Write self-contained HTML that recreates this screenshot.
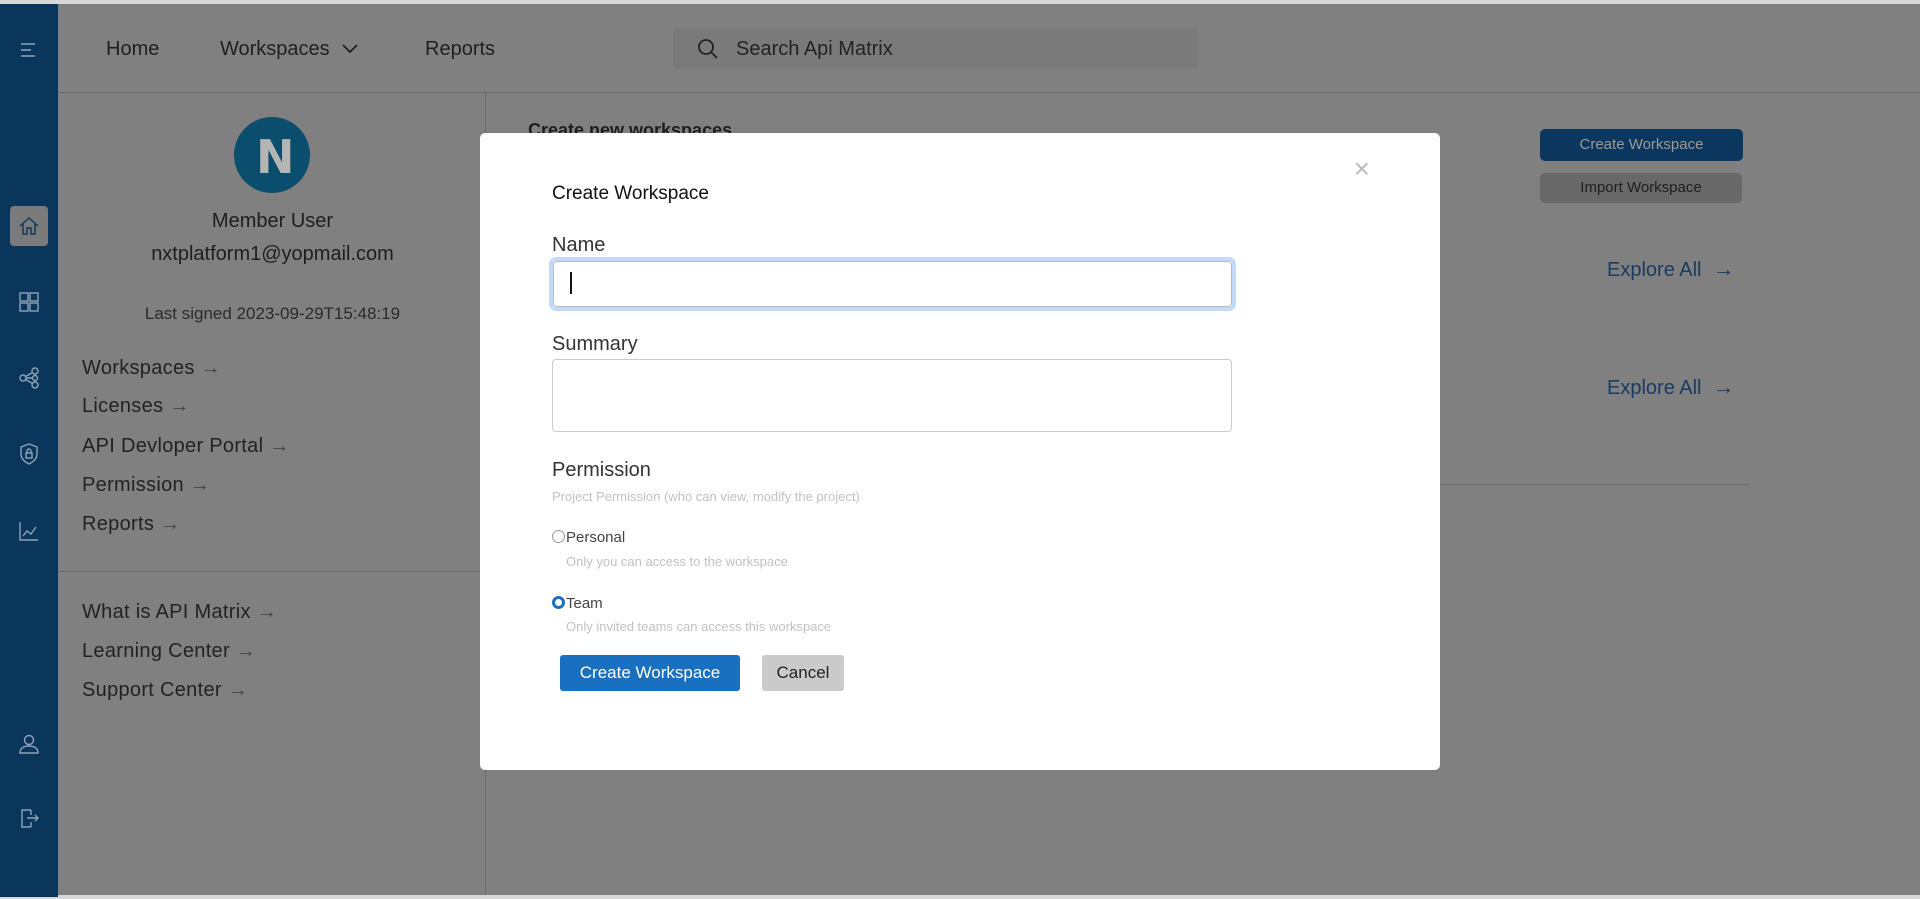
<!DOCTYPE html>
<html><head><meta charset="utf-8"><style>
*{margin:0;padding:0;box-sizing:border-box}
body{width:1920px;height:899px;overflow:hidden;background:#808080;font-family:"Liberation Sans",sans-serif;position:relative;color:#1e1e1e}
.a{position:absolute;white-space:nowrap}
.side{position:absolute;left:0;top:4px;width:58px;height:893px;background:#0b365c}
.ic{position:absolute;left:17px;width:24px;height:24px;fill:none;stroke:#8fa3b8;stroke-width:1.4}
.nav{font-size:20px;color:#1f1f1f;top:38px}
.lk{font-size:20px;color:#222;left:82px;letter-spacing:.3px}
.lk span{color:#444;font-size:20px}
.modal{position:absolute;left:480px;top:133px;width:960px;height:637px;background:#fff;border-radius:5px}
.m{position:absolute;white-space:nowrap}
</style></head><body>
<div class="a" style="left:0;top:0;width:1920px;height:4px;background:#d8d8d8"></div>
<div class="a" style="left:0;top:895px;width:1920px;height:4px;background:#d8d8d8"></div>
<div class="side">
<svg class="ic" style="top:34px" viewBox="0 0 24 24"><path d="M4 6h14M4 12h10M4 18h14"/></svg>
<div class="a" style="left:10px;top:202px;width:38px;height:40px;background:#7b7b7b;border-radius:4px"></div>
<svg class="ic" style="top:210px;stroke:#0b365c" viewBox="0 0 24 24"><path d="M3 12L12 4l9 8M6 10v10h4v-6h4v6h4V10"/></svg>
<svg class="ic" style="top:286px" viewBox="0 0 24 24"><rect x="3" y="3" width="8" height="8"/><rect x="13" y="3" width="8" height="8"/><rect x="3" y="13" width="8" height="8"/><rect x="13" y="13" width="8" height="8"/></svg>
<svg class="ic" style="top:362px" viewBox="0 0 24 24"><circle cx="6" cy="12" r="3"/><circle cx="18" cy="5" r="3"/><circle cx="18" cy="19" r="3"/><circle cx="18" cy="12" r="2.5"/><path d="M9 12h6M8.5 10.5l7-4M8.5 13.5l7 4"/></svg>
<svg class="ic" style="top:438px" viewBox="0 0 24 24"><path d="M12 2l8 3v7c0 5-4 8-8 10-4-2-8-5-8-10V5z"/><rect x="9" y="11" width="6" height="5"/><path d="M10 11V9a2 2 0 0 1 4 0v2"/></svg>
<svg class="ic" style="top:515px" viewBox="0 0 24 24"><path d="M3 3v18h18M6 17l4-5 4 3 5-7"/></svg>
<svg class="ic" style="top:728px" viewBox="0 0 24 24"><circle cx="12" cy="8" r="4.5"/><path d="M3 21c0-5 4-7 9-7s9 2 9 7z"/></svg>
<svg class="ic" style="top:802px" viewBox="0 0 24 24"><path d="M14 4H5v17h9M14 16v5M14 4v5M10 12h11M18 9l3 3-3 3"/></svg>
</div>
<div class="a" style="left:58px;top:92px;width:1862px;height:1px;background:#6a6a6a"></div>
<div class="a" style="left:485px;top:92px;width:1px;height:803px;background:#6a6a6a"></div>
<div class="a nav" style="left:106px">Home</div>
<div class="a nav" style="left:220px">Workspaces <svg width="18" height="12" viewBox="0 0 18 12" style="margin-left:6px"><path d="M2 2l7 7 7-7" stroke="#1f1f1f" stroke-width="1.8" fill="none"/></svg></div>
<div class="a nav" style="left:425px">Reports</div>
<div class="a" style="left:673px;top:29px;width:525px;height:40px;background:#7a7a7a;border-radius:3px"></div>
<svg class="a" style="left:696px;top:37px" width="24" height="24" viewBox="0 0 24 24"><circle cx="10" cy="10" r="7" stroke="#222" stroke-width="1.8" fill="none"/><path d="M15 15l6 6" stroke="#222" stroke-width="1.8"/></svg>
<div class="a" style="left:736px;top:38px;font-size:20px;color:#222">Search Api Matrix</div>
<div class="a" style="left:234px;top:117px;width:76px;height:76px;border-radius:50%;background:#0a4d6c;overflow:hidden"><div style="position:absolute;left:22px;top:17px;font-size:46px;font-weight:bold;color:#b5b5b5;line-height:1;font-family:'DejaVu Sans',sans-serif">N</div></div>
<div class="a" style="left:0;width:545px;text-align:center;top:210px;font-size:20px">Member User</div>
<div class="a" style="left:0;width:545px;text-align:center;top:243px;font-size:20px">nxtplatform1@yopmail.com</div>
<div class="a" style="left:0;width:545px;text-align:center;top:304px;font-size:17px;color:#2a2a2a">Last signed 2023-09-29T15:48:19</div>
<div class="a lk" style="top:357px">Workspaces <span>→</span></div>
<div class="a lk" style="top:395px">Licenses <span>→</span></div>
<div class="a lk" style="top:435px">API Devloper Portal <span>→</span></div>
<div class="a lk" style="top:474px">Permission <span>→</span></div>
<div class="a lk" style="top:513px">Reports <span>→</span></div>
<div class="a" style="left:58px;top:571px;width:427px;height:1px;background:#6a6a6a"></div>
<div class="a lk" style="top:601px">What is API Matrix <span>→</span></div>
<div class="a lk" style="top:640px">Learning Center <span>→</span></div>
<div class="a lk" style="top:679px">Support Center <span>→</span></div>
<div class="a" style="left:528px;top:120px;font-size:18px;font-weight:bold;color:#1e1e1e">Create new workspaces</div>
<div class="a" style="left:1540px;top:129px;width:203px;height:32px;background:#0b375e;border-radius:5px;color:#9a9a9a;font-size:15px;text-align:center;line-height:32px">Create Workspace</div>
<div class="a" style="left:1540px;top:173px;width:202px;height:30px;background:#686868;border-radius:5px;color:#1e1e1e;font-size:15px;text-align:center;line-height:30px">Import Workspace</div>
<div class="a" style="left:1607px;top:256px;font-size:20px;color:#193b62">Explore All &nbsp;<span style="font-size:22px">→</span></div>
<div class="a" style="left:1607px;top:374px;font-size:20px;color:#193b62">Explore All &nbsp;<span style="font-size:22px">→</span></div>
<div class="a" style="left:486px;top:484px;width:1263px;height:1px;background:#6a6a6a"></div>

<div class="modal">
<div class="m" style="right:70px;top:20px;font-size:28px;color:#bbb;font-weight:300">×</div>
<div class="m" style="left:72px;top:50px;font-size:19px;color:#111">Create Workspace</div>
<div class="m" style="left:72px;top:101px;font-size:20px;color:#333">Name</div>
<div class="m" style="left:69px;top:124px;width:687px;height:54px;border:4px solid #c4dafa;border-radius:7px"><div style="width:100%;height:100%;border:1px solid #bbb;border-radius:4px;background:#fff"></div></div>
<div class="m" style="left:90px;top:139px;width:2px;height:22px;background:#111"></div>
<div class="m" style="left:72px;top:200px;font-size:20px;color:#333">Summary</div>
<div class="m" style="left:72px;top:226px;width:680px;height:73px;border:1px solid #ccc;border-radius:4px"></div>
<div class="m" style="left:72px;top:326px;font-size:20px;color:#333">Permission</div>
<div class="m" style="left:72px;top:356px;font-size:13px;color:#c2c2c2">Project Permission (who can view, modify the project)</div>
<div class="m" style="left:72px;top:397px;width:13px;height:13px;border:1px solid #999;border-radius:50%"></div>
<div class="m" style="left:86px;top:396px;font-size:15px;color:#444">Personal</div>
<div class="m" style="left:86px;top:421px;font-size:13px;color:#c2c2c2">Only you can access to the workspace</div>
<div class="m" style="left:72px;top:463px;width:13px;height:13px;border:3px solid #1a6fc4;border-radius:50%"></div>
<div class="m" style="left:86px;top:462px;font-size:15px;color:#444">Team</div>
<div class="m" style="left:86px;top:486px;font-size:13px;color:#c2c2c2">Only invited teams can access this workspace</div>
<div class="m" style="left:80px;top:522px;width:180px;height:36px;background:#1a70c0;border-radius:3px;color:#fff;font-size:17px;text-align:center;line-height:36px">Create Workspace</div>
<div class="m" style="left:282px;top:522px;width:82px;height:36px;background:#cacaca;border-radius:3px;color:#222;font-size:17px;text-align:center;line-height:36px">Cancel</div>
</div>
</body></html>
